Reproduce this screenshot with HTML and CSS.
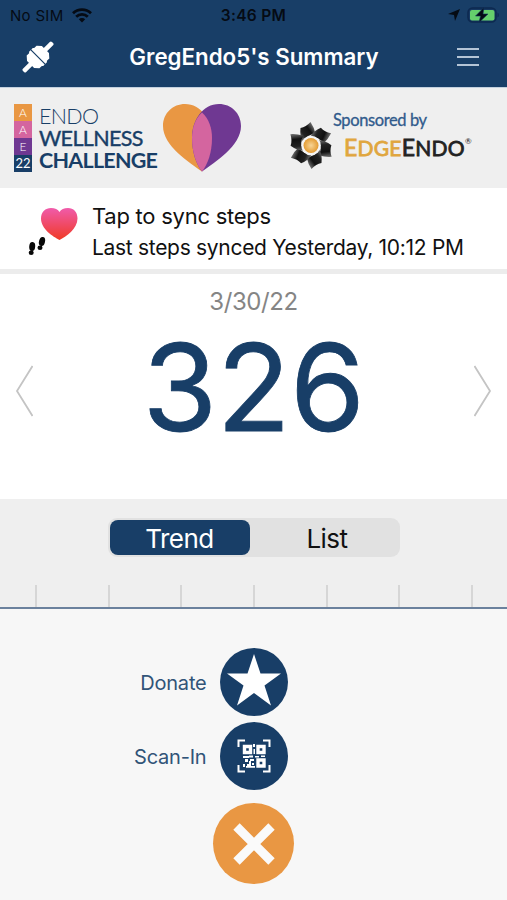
FILE: index.html
```html
<!DOCTYPE html>
<html lang="en">
<head>
    <meta charset="UTF-8">
    <meta name="viewport" content="width=device-width, initial-scale=1.0">
    <title>Summary</title>

    <link rel="stylesheet" href="styles.css">
</head>
<body>

    <header class="header">
        <div class="status-bar">
            <div class="status-left">
                <span class="carrier">No SIM</span>
                <svg width="20" height="15" viewBox="0 0 20 15" fill="none" stroke="#050b14" stroke-width="2.8">
                    <path d="M1 5.2a13 13 0 0 1 18 0"/>
                    <path d="M4.2 8.7a8.4 8.4 0 0 1 11.6 0"/>
                    <path d="M10 14.5L6.8 11.2a4.6 4.6 0 0 1 6.4 0z" fill="#050b14" stroke="none"/>
                </svg>
            </div>
            <span class="clock">3:46 PM</span>
            <div class="status-right">
                <svg width="12" height="12" viewBox="0 0 12 12"><path d="M12 0L7 12L6 6L0 5z" fill="#050b14"/></svg>
                <svg width="32" height="16" viewBox="0 0 32 16">
                    <rect x="1" y="1" width="28" height="14" rx="4.5" fill="#163862" stroke="#0d2950" stroke-width="1.5"/>
                    <path d="M30.5 5.5v5q1.4-.8 1.4-2.5t-1.4-2.5z" fill="#0d2950"/>
                    <rect x="3" y="3" width="24.500" height="10.500" rx="2" fill="#65cf6c"/>
                    <path d="M17 .5L8.500 9h5L12 15.500L21 7h-5z" fill="#050b14" stroke="#163862" stroke-width=".6"/>
                </svg>
            </div>
        </div>
        <div class="nav-bar">
            <svg class="plug" width="32" height="32" viewBox="0 0 32 32" fill="#fff">
                <g transform="rotate(-45 16 16)">
                    <rect x="-4.500" y="13.700" width="14" height="4.600" rx="1.500"/>
                    <rect x="22.500" y="13.700" width="14" height="4.600" rx="1.500"/>
                    <path d="M15.400 6v20h-2l-1-1H9l-3.500-4V11L9 7h3.400l1-1z"/>
                    <path d="M16.600 6v20h2l1-1H23l3.500-4V11L23 7h-3.400l-1-1z"/>
                </g>
            </svg>
            <h1 class="title">GregEndo5's Summary</h1>
            <div class="menu"><span></span><span></span><span></span></div>
        </div>
    </header>

    <section class="banner">
        <div class="aae">
            <span class="aae-orange">A</span>
            <span class="aae-pink">A</span>
            <span class="aae-purple">E</span>
            <span class="aae-navy">22</span>
        </div>
        <div class="wordmark">
            <span class="endo">ENDO</span>
            <span class="wellness">WELLNESS</span>
            <span class="challenge">CHALLENGE</span>
        </div>
        <svg class="logo-heart" width="78" height="68" viewBox="0 0 78 68">
            <path d="M39 67.500C26 58 0 42 0 22C0 9 10 0 22 0C38 0 49 16 49 34C49 48 45 60 39 67.500z" fill="#e99743"/>
            <path d="M39 67.500C52 58 78 42 78 22C78 9 68 0 56 0C40 0 29 16 29 34C29 48 33 60 39 67.500z" fill="#6f3892"/>
            <path d="M39 8.500C46 15 49 24 49 34C49 48 45 60 39 67.500C33 60 29 48 29 34C29 24 32 15 39 8.500z" fill="#d4659f"/>
        </svg>
        <div class="sponsor">
            <svg class="sponsor-mark" width="44" height="47" viewBox="0 0 44 47">
                <defs>
                    <linearGradient id="blade" x1="1" y1="0" x2="0" y2="1">
                        <stop offset=".1" stop-color="#8d8d8d"/>
                        <stop offset=".4" stop-color="#111"/>
                        <stop offset=".7" stop-color="#222"/>
                        <stop offset="1" stop-color="#8d8d8d"/>
                    </linearGradient>
                    <radialGradient id="core">
                        <stop offset="0" stop-color="#f8d596"/>
                        <stop offset="1" stop-color="#e39b32"/>
                    </radialGradient>
                    <path id="petal" d="M11.500 6Q17 5 21.500 0Q25 5 26.500 12Q18 12 14 20Q10.500 14 11.500 6z" fill="url(#blade)"/>
                </defs>
                <use href="#petal"/>
                <use href="#petal" transform="rotate(60 22 23.500)"/>
                <use href="#petal" transform="rotate(120 22 23.500)"/>
                <use href="#petal" transform="rotate(180 22 23.500)"/>
                <use href="#petal" transform="rotate(240 22 23.500)"/>
                <use href="#petal" transform="rotate(300 22 23.500)"/>
                <circle cx="22" cy="23.500" r="9.800" fill="#f5f5f5"/>
                <circle cx="22" cy="23.500" r="7.500" fill="url(#core)"/>
            </svg>
            <div class="sponsor-text">
                <span class="sponsored-by">Sponsored by</span>
                <span class="sponsor-name"><b class="edge"><big>E</big>DGE</b><b><big>E</big>NDO</b><sup>®</sup></span>
            </div>
        </div>
    </section>

    <section class="sync">
        <svg class="sync-icon" width="50" height="50" viewBox="0 0 50 50">
            <defs>
                <linearGradient id="health" x1="0" y1="0" x2="0" y2="1">
                    <stop offset="0" stop-color="#f05bab"/>
                    <stop offset="1" stop-color="#f03a25"/>
                </linearGradient>
            </defs>
            <path d="M31.500 33C25 29.500 13 22 13 11.500C13 5 17.500 1 23 1C27 1 30 2.500 31.500 5C33 2.500 36 1 40 1C45.500 1 49.500 5 49.500 11.500C49.500 22 38 29.500 31.500 33z" fill="url(#health)"/>
            <g fill="#080808">
                <ellipse cx="4.200" cy="39.500" rx="3" ry="4.600" transform="rotate(5 4 39.500)"/>
                <ellipse cx="3.200" cy="45.800" rx="2.500" ry="2.200"/>
                <ellipse cx="14" cy="34.500" rx="3" ry="4.600" transform="rotate(14 14 34.500)"/>
                <ellipse cx="12" cy="40.800" rx="2.500" ry="2.200"/>
            </g>
        </svg>
        <div class="sync-text">
            <p class="sync-title">Tap to sync steps</p>
            <p class="sync-time">Last steps synced Yesterday, 10:12 PM</p>
        </div>
    </section>

    <section class="day">
        <p class="date">3/30/22</p>
        <div class="counter">
            <svg width="18" height="52" viewBox="0 0 18 52" fill="none" stroke="#c4c4c4" stroke-width="1.800"><path d="M17.500 1L2 26L17.500 51"/></svg>
            <span class="steps">326</span>
            <svg width="18" height="52" viewBox="0 0 18 52" fill="none" stroke="#c4c4c4" stroke-width="1.800"><path d="M.5 1L16 26L.5 51"/></svg>
        </div>
    </section>

    <section class="history">
        <div class="tabs">
            <button class="tab active">Trend</button>
            <button class="tab">List</button>
        </div>
        <div class="ticks">
            <span></span><span></span><span></span><span></span><span></span><span></span><span></span>
        </div>
    </section>

    <section class="actions">
        <div class="action">
            <span class="label">Donate</span>
            <button class="round">
                <svg width="68" height="68" viewBox="0 0 68 68"><path d="M34 6L40.500 25.500H61L44.500 37.500L51 57.500L34 45L17 57.500L23.500 37.500L7 25.500H27.500z" fill="#fff"/></svg>
            </button>
        </div>
        <div class="action">
            <span class="label">Scan-In</span>
            <button class="round">
                <svg width="34" height="34" viewBox="0 0 34 34">
                    <path d="M1.500 8V1.500H8M26 1.500h6.500V8M32.500 26v6.500H26M8 32.500H1.500V26" fill="none" stroke="#fff" stroke-width="2"/>
                    <path d="M7.500 7.500h6v6h-6zM21 7.500h6v6h-6zM21 21h6v6h-6z" fill="none" stroke="#fff" stroke-width="3.400"/>
                    <path d="M16 5h2v3h-2zM16.500 10h1.500v5h-1.500zM6 17h6v2H6zM12 16.500h4v2h-4zM18 17h4v1.500h-4zM24 16.500h4v1.500h-4zM8 20h3v3H8zM13 20h4v2h-4zM12 22h2v4h-2zM6 25h2v3H6zM10 25h4v2h-4zM15 24h2v2h-2zM9 27h9v1.800h-9z" fill="#fff"/>
                </svg>
            </button>
        </div>
        <button class="close">
            <svg width="42" height="42" viewBox="0 0 42 42" stroke="#fafafa" stroke-width="9"><path d="M3.500 3.500L38.500 38.500M38.500 3.500L3.500 38.500"/></svg>
        </button>
    </section>

</body>
</html>
```

FILE: styles.css
```css
* {
    box-sizing: border-box;
}

body {
    margin: 0;
    height: 900px;
    overflow: hidden;
    background-color: #fff;
    font-family: Inter, "Liberation Sans", sans-serif;
    color: #111;
}

p, h1 {
    margin: 0;
}

svg {
    display: block;
    flex: none;
}

button {
    border: none;
    padding: 0;
    font-family: inherit;
    cursor: pointer;
}

.header {
    height: 88px;
    background-color: #183e67;
    border-bottom: 1px solid #c3d0de;
}

.status-bar {
    display: grid;
    grid-template-columns: 1fr auto 1fr;
    align-items: center;
    height: 30px;
    padding: 0 8px 0 10px;
    color: #050b14;
    font-size: 15px;
}

.status-left,
.status-right {
    display: flex;
    align-items: center;
    gap: 8px;
}

.status-right {
    justify-content: flex-end;
    gap: 7px;
}

.carrier {
    letter-spacing: 0.3px;
}

.clock {
    margin-right: 2px;
    font-size: 15.5px;
    font-weight: 600;
    letter-spacing: 0.3px;
}

.nav-bar {
    display: flex;
    align-items: center;
    justify-content: space-between;
    height: 54px;
    padding: 0 28px 0 22px;
}

.title {
    margin-right: 3px;
    color: #fff;
    font-size: 22.3px;
    font-weight: 600;
    line-height: 28px;
}

.menu {
    display: flex;
    flex-direction: column;
    gap: 6px;
    width: 22px;
}

.menu span {
    height: 2px;
    background-color: #b4c4d6;
}

.banner {
    display: flex;
    height: 100px;
    padding: 16px 0 0 14px;
    background-color: #efefef;
}

.aae {
    display: flex;
    flex-direction: column;
    width: 18px;
    height: 67px;
    color: #fff;
    font-family: Lato, sans-serif;
    font-size: 12px;
    font-weight: 300;
    text-align: center;
}

.aae span {
    flex: 1;
    line-height: 17px;
}

.aae-orange { background-color: #e99743; }
.aae-pink { background-color: #d4659f; }
.aae-purple { background-color: #6f3892; }

.aae .aae-navy {
    background-color: #183e67;
    font-size: 13px;
    font-weight: 400;
}

.wordmark {
    display: flex;
    flex-direction: column;
    width: 124px;
    padding: 1px 0 0 7px;
    color: #183e67;
    font-family: Lato, sans-serif;
    font-size: 21.5px;
    line-height: 22px;
}

.endo {
    font-weight: 300;
    letter-spacing: -0.7px;
}

.wellness {
    letter-spacing: -0.65px;
    -webkit-text-stroke: 0.4px #183e67;
}

.challenge {
    font-weight: 700;
    letter-spacing: -0.75px;
}

.logo-heart {
    margin-left: 7px;
}

.sponsor {
    display: flex;
    margin-left: 48px;
}

.sponsor-mark {
    margin-top: 18px;
}

.sponsor-text {
    display: flex;
    flex-direction: column;
    font-family: Lato, sans-serif;
    white-space: nowrap;
}

.sponsored-by {
    margin-top: 6px;
    color: #315b8c;
    font-size: 16.5px;
    line-height: 20px;
    letter-spacing: -0.4px;
    -webkit-text-stroke: 0.3px #315b8c;
}

.sponsor-name {
    display: flex;
    align-items: baseline;
    margin: 4px 0 0 11px;
    color: #222;
    font-size: 21px;
    line-height: 26px;
}

.sponsor-name b {
    font-weight: 400;
    letter-spacing: 0.25px;
    -webkit-text-stroke: 0.8px #222;
}

.sponsor-name big {
    font-size: 23px;
}

.sponsor-name .edge {
    color: #e0a63e;
    -webkit-text-stroke-color: #e0a63e;
}

.sponsor-name sup {
    align-self: flex-start;
    font-size: 8px;
    line-height: 14px;
}

.sync {
    display: flex;
    height: 86px;
    padding: 19px 0 0 28px;
    border-bottom: 5px solid #ececec;
}

.sync-text {
    margin-left: 14px;
    white-space: nowrap;
}

.sync-title {
    font-size: 22px;
    line-height: 18px;
    letter-spacing: -0.25px;
}

.sync-time {
    margin-top: 14px;
    font-size: 21px;
    line-height: 18px;
    letter-spacing: -0.3px;
}

.day {
    height: 225px;
    padding-top: 14px;
}

.date {
    color: #858585;
    font-size: 24px;
    line-height: 28px;
    letter-spacing: -0.4px;
    text-align: center;
}

.counter {
    display: flex;
    align-items: center;
    justify-content: space-between;
    height: 150px;
    padding: 0 15px;
}

.steps {
    margin-bottom: 7px;
    color: #183e67;
    font-size: 121px;
    line-height: 143px;
    letter-spacing: -0.5px;
    -webkit-text-stroke: 0.8px #183e67;
}

.history {
    height: 110px;
    padding-top: 19px;
    background-color: #efefef;
    border-bottom: 2px solid #6b819d;
}

.tabs {
    display: flex;
    width: 292px;
    height: 39px;
    margin: 0 auto;
    padding: 2px;
    border-radius: 9px;
    background-color: #e1e1e1;
}

.tab {
    flex: 1;
    padding: 2px 0 0 7px;
    border-radius: 8px;
    background: none;
    color: #111;
    font-size: 26px;
    letter-spacing: -0.5px;
}

.tab.active {
    flex: none;
    width: 140px;
    padding-left: 0;
    background-color: #183e67;
    color: #fff;
}

.ticks {
    display: flex;
    justify-content: space-between;
    height: 22px;
    margin-top: 28px;
    padding: 0 34px 0 35px;
}

.ticks span {
    width: 2px;
    background-color: #d6d6d6;
}

.actions {
    display: flex;
    flex-direction: column;
    align-items: center;
    height: 291px;
    padding-top: 39px;
    background-color: #f7f7f7;
}

.action {
    display: grid;
    grid-template-columns: 1fr 68px 1fr;
    align-items: center;
    column-gap: 13px;
    width: 100%;
    margin-bottom: 6px;
}

.label {
    padding-top: 1px;
    color: #315478;
    font-size: 20px;
    letter-spacing: -0.2px;
    text-align: right;
}

.round,
.close {
    display: flex;
    align-items: center;
    justify-content: center;
    width: 68px;
    height: 68px;
    border-radius: 50%;
    background-color: #183e67;
}

.close {
    width: 81px;
    height: 81px;
    margin-top: 7px;
    background-color: #e99743;
}
```
